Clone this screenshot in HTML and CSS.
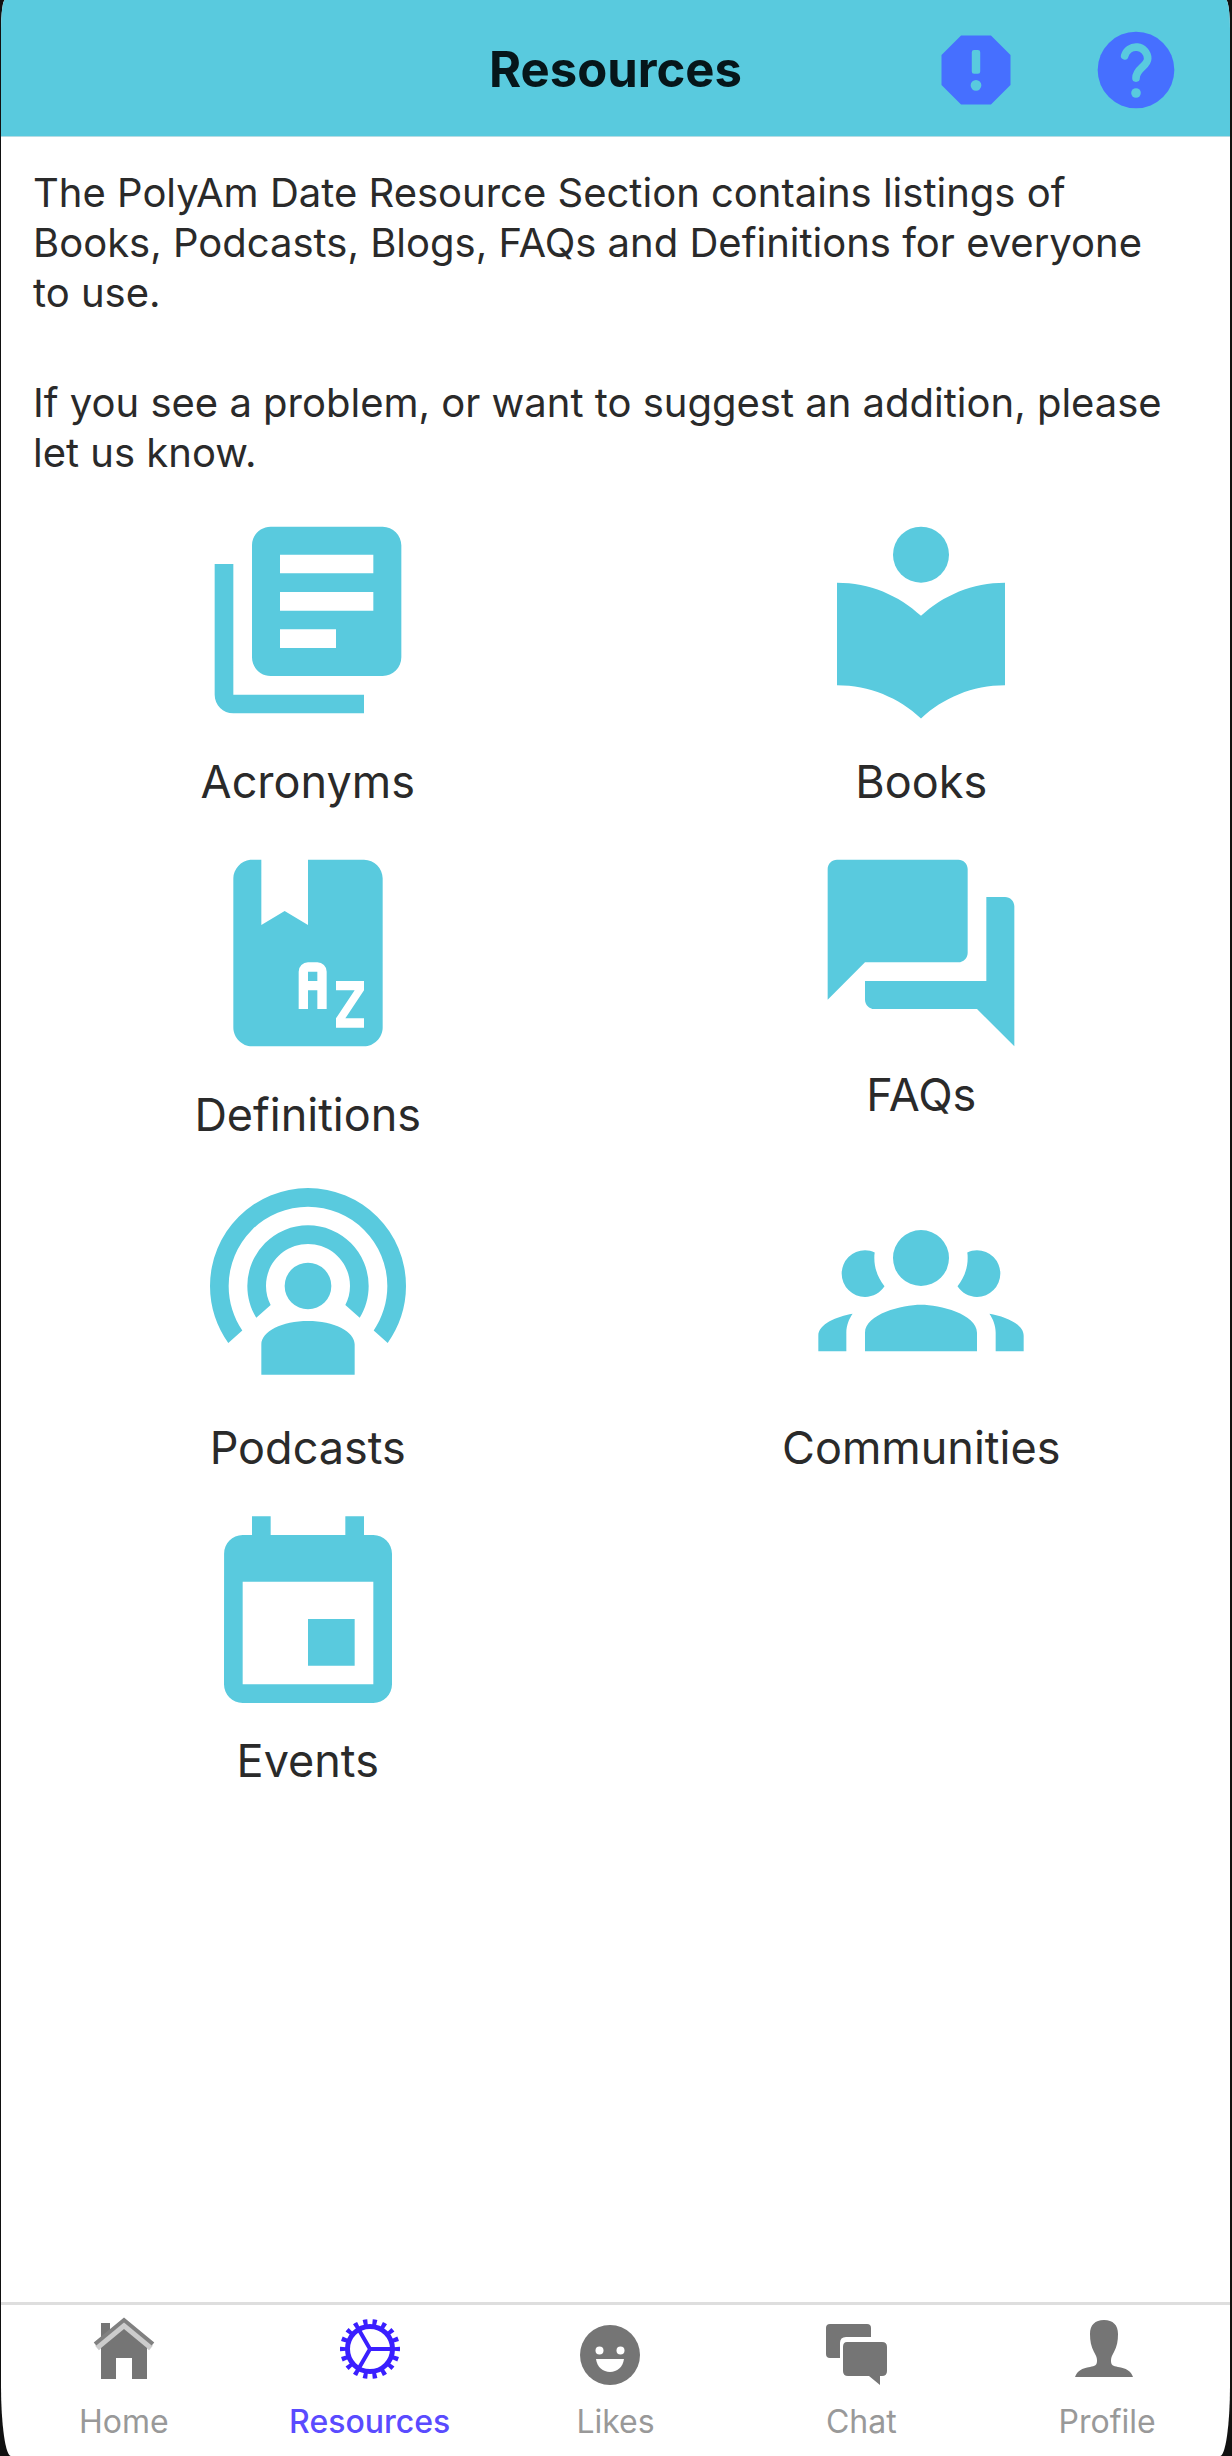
FILE: index.html
```html
<!DOCTYPE html>
<html lang="en">
<head>
<meta charset="utf-8">
<meta name="viewport" content="width=device-width, initial-scale=1">
<title>Resources</title>
<link rel="stylesheet" href="styles.css">
</head>
<body>
<div class="screen">
  <header class="header">
    <h1 class="title">Resources</h1>
    <div class="actions">
      <button class="action" type="button" aria-label="Report a problem">
        <svg viewBox="0 0 24 24"><path fill-rule="evenodd" d="M15.9 3H8.1L3 8.1v7.8L8.1 21h7.8L21 15.9V8.1zM12 17.4a1.4 1.4 0 1 1 0-2.8 1.4 1.4 0 0 1 0 2.8zM13.1 12.4a.6.6 0 0 1-.6.6h-1a.6.6 0 0 1-.6-.6V7.4a.6.6 0 0 1 .6-.6h1a.6.6 0 0 1 .6.6z"/></svg>
      </button>
      <button class="action" type="button" aria-label="Help">
        <svg viewBox="0 0 24 24"><circle cx="12" cy="12" r="10"/><path class="mark" d="M9.05 8.3A3.05 3.05 0 0 1 15.05 9c0 2.1-3.05 2.5-3.05 5.1"/><circle class="dot" cx="12" cy="18" r="1.25"/></svg>
      </button>
    </div>
  </header>

  <main class="content">
    <div class="intro">
      <p>The PolyAm Date Resource Section contains listings of Books, Podcasts, Blogs, FAQs and Definitions for everyone to use.</p>
      <p>If you see a problem, or want to suggest an addition, please let us know.</p>
    </div>

    <nav class="grid" aria-label="Resource sections">
      <a class="tile" href="#acronyms">
        <svg viewBox="0 0 24 24"><path d="M4 6H2v14c0 1.100.9 2 2 2h14v-2H4V6zM20 2H8c-1.100 0-2 .9-2 2v12c0 1.100.9 2 2 2h12c1.100 0 2-.9 2-2V4c0-1.100-.9-2-2-2zM19 7H9V5h10zM19 11H9V9h10zM15 15H9v-2h6z" fill-rule="evenodd"/></svg>
        <span>Acronyms</span>
      </a>
      <a class="tile" href="#books">
        <svg viewBox="0 0 24 24"><path d="M12 11.550C9.640 9.350 6.480 8 3 8v11c3.480 0 6.640 1.350 9 3.550 2.360-2.190 5.520-3.550 9-3.550V8c-3.480 0-6.640 1.350-9 3.550z"/><circle cx="12" cy="5" r="3"/></svg>
        <span>Books</span>
      </a>
      <a class="tile" href="#definitions">
        <svg viewBox="0 0 24 24"><path fill-rule="evenodd" d="M5.810 2C4.830 2.090 4 3 4 4V20C4 21.050 4.950 22 6 22H18C19.050 22 20 21.050 20 20V4C20 2.890 19.100 2 18 2H12V9L9.500 7.500L7 9V2H6ZM12 13H13A1 1 0 0 1 14 14V18H13V16H12V18H11V14A1 1 0 0 1 12 13M12 14V15H13V14H12M15 15H18V16L16 19H18V20H15V19L17 16H15V15Z"/></svg>
        <span>Definitions</span>
      </a>
      <a class="tile tile-close" href="#faqs">
        <svg viewBox="0 0 24 24"><path d="M21 6h-2v9H6v2c0 .55.45 1 1 1h11l4 4V7c0-.55-.45-1-1-1zm-4 6V3c0-.55-.45-1-1-1H3c-.55 0-1 .45-1 1v14l4-4h10c.55 0 1-.45 1-1z"/></svg>
        <span>FAQs</span>
      </a>
      <a class="tile" href="#podcasts">
        <svg viewBox="0 0 24 24"><path d="M17,18.25V21.5H7V18.25C7,16.87 9.24,15.75 12,15.75C14.76,15.75 17,16.87 17,18.25M12,5.5A6.5,6.5 0 0,1 18.5,12C18.5,13.25 18.15,14.42 17.54,15.41L16,14.04C16.32,13.43 16.5,12.73 16.5,12C16.5,9.5 14.5,7.5 12,7.5C9.5,7.5 7.5,9.5 7.5,12C7.5,12.73 7.68,13.43 8,14.04L6.46,15.41C5.85,14.42 5.5,13.25 5.5,12A6.5,6.5 0 0,1 12,5.5M12,1.5A10.5,10.5 0 0,1 22.5,12C22.5,14.28 21.77,16.39 20.54,18.11L19.04,16.76C19.96,15.4 20.5,13.76 20.5,12A8.5,8.5 0 0,0 12,3.5A8.5,8.5 0 0,0 3.5,12C3.5,13.76 4.04,15.4 4.96,16.76L3.46,18.11C2.23,16.39 1.5,14.28 1.5,12A10.5,10.5 0 0,1 12,1.5M12,9.5A2.5,2.5 0 0,1 14.5,12A2.5,2.5 0 0,1 12,14.5A2.5,2.5 0 0,1 9.5,12A2.5,2.5 0 0,1 12,9.5Z"/></svg>
        <span>Podcasts</span>
      </a>
      <a class="tile" href="#communities">
        <svg viewBox="0 0 24 24"><path d="M12,6A3,3 0 0,0 9,9A3,3 0 0,0 12,12A3,3 0 0,0 15,9A3,3 0 0,0 12,6M6,8.17A2.5,2.5 0 0,0 3.5,10.67A2.5,2.5 0 0,0 6,13.17C6.88,13.17 7.65,12.71 8.09,12.03C7.42,11.18 7,10.15 7,9C7,8.8 7,8.6 7.04,8.4C6.72,8.25 6.37,8.17 6,8.17M18,8.17C17.63,8.17 17.28,8.25 16.96,8.4C17,8.6 17,8.8 17,9C17,10.15 16.58,11.18 15.91,12.03C16.35,12.71 17.12,13.17 18,13.17A2.5,2.5 0 0,0 20.5,10.67A2.5,2.5 0 0,0 18,8.17M12,14C10,14 6,15 6,17V19H18V17C18,15 14,14 12,14M4.67,14.97C3,15.26 1,16.04 1,17.33V19H4V17C4,16.22 4.29,15.53 4.67,14.97M19.33,14.97C19.71,15.53 20,16.22 20,17V19H23V17.33C23,16.04 21,15.26 19.33,14.97Z"/></svg>
        <span>Communities</span>
      </a>
      <a class="tile tile-close" href="#events">
        <svg viewBox="0 0 24 24"><path d="M17 12h-5v5h5v-5zM16 1v2H8V1H6v2H5c-1.110 0-1.990.9-1.990 2L3 19c0 1.100.890 2 2 2h14c1.100 0 2-.9 2-2V5c0-1.100-.9-2-2-2h-1V1h-2zm3 18H5V8h14v11z"/></svg>
        <span>Events</span>
      </a>
    </nav>
  </main>

  <nav class="tabs" aria-label="Main">
    <a class="tab" href="#home">
      <svg viewBox="0 0 72 72"><path d="M13 9h9v8l-9 9z"/><path class="roof-gap" d="M9 34 36 12l27 22"/><path class="roof" d="M7 30 36 6l29 24"/><path d="M36 15 59 34v31H44V44H28v21H13V34z"/></svg>
      <span>Home</span>
    </a>
    <a class="tab tab-active" href="#resources" aria-current="page">
      <svg viewBox="0 0 72 72"><g class="gear"><circle cx="36" cy="35" r="22.500" stroke-width="5"/><circle cx="36" cy="35" r="27" stroke-width="6" pathLength="36" stroke-dasharray=".9 1.100" stroke-dashoffset=".45"/><path stroke-width="4" d="M36 35h24M36 35 24 14.200M36 35 24 55.800"/></g></svg>
      <span>Resources</span>
    </a>
    <a class="tab" href="#likes">
      <svg viewBox="5 0 72 72"><circle cx="36" cy="41" r="30"/><g class="face"><circle cx="25.500" cy="36.500" r="4"/><circle cx="46.500" cy="36.500" r="4"/><path d="M22 45h28c-1 8-7 13-14 13s-13-5-14-13z"/></g></svg>
      <span>Likes</span>
    </a>
    <a class="tab" href="#chat">
      <svg viewBox="5 0 72 72"><path d="M10 10h37q4 0 4 4v9H26q-6 0-6 6v15H10q-4 0-4-4V14q0-4 4-4z"/><path d="M27 28h35q5 0 5 5v24q0 5-5 5h-2v9l-11-9H28q-5 0-5-5V33q0-5 4-5z"/></svg>
      <span>Chat</span>
    </a>
    <a class="tab" href="#profile">
      <svg viewBox="3 0 72 72"><path d="M36 6c9 0 14 5 14 14 0 7-1 12-4 18-2 4-3 5-3 9 0 4 2 5 7 6 8 1 13 4 15 10H7c2-6 7-9 15-10 5-1 7-2 7-6 0-4-1-5-3-9-3-6-4-11-4-18 0-9 5-14 14-14z"/></svg>
      <span>Profile</span>
    </a>
  </nav>
</div>
</body>
</html>
```
FILE: styles.css
```css
* {
  box-sizing: border-box;
}

body {
  margin: 0;
  background: #111;
  font-family: Inter, "Liberation Sans", sans-serif;
  color: #2a2a2a;
}

a {
  color: inherit;
  text-decoration: none;
}

.screen {
  display: flex;
  flex-direction: column;
  min-height: 100vh;
  margin: 0 2px 0 1px;
  overflow: hidden;
  background: #fff;
  border-radius: 4px 4px 10px 10px / 30px 30px 70px 70px;
}

.header {
  display: grid;
  grid-template-columns: 1fr auto 1fr;
  align-items: center;
  height: 137px;
  padding: 3px 48px 0;
  background: #59cade;
  border-bottom: 1px solid #b5dce4;
}

.title {
  grid-column: 2;
  margin: 0;
  font-size: 49px;
  line-height: 60px;
  font-weight: 700;
  color: #06161a;
}

.actions {
  display: flex;
  justify-content: flex-end;
  gap: 68px;
}

.action {
  width: 92px;
  height: 92px;
  padding: 0;
  border: 0;
  background: none;
  fill: #466fff;
}

.action svg {
  display: block;
}

.mark {
  fill: none;
  stroke: #59cade;
  stroke-width: 2;
  stroke-linecap: round;
}

.dot {
  fill: #59cade;
}

.content {
  flex: 1;
}

.intro {
  padding: 31px 48px 30px 32px;
  font-size: 40px;
  line-height: 50px;
}

.intro p {
  margin: 0;
}

.intro p + p {
  margin-top: 60px;
}

.grid {
  display: grid;
  grid-template-columns: 1fr 1fr;
  row-gap: 33px;
  padding-right: 2px;
}

.tile {
  display: flex;
  flex-direction: column;
  align-items: center;
  gap: 24px;
  font-size: 45px;
  line-height: 52px;
}

.tile-close {
  gap: 4px;
}

.tile svg {
  width: 224px;
  height: 224px;
  fill: #59cade;
}

.tabs {
  display: grid;
  grid-template-columns: repeat(5, 1fr);
  height: 154px;
  padding-top: 9px;
  border-top: 3px solid #dedede;
}

.tab {
  display: flex;
  flex-direction: column;
  align-items: center;
  gap: 16px;
  font-size: 32px;
  line-height: 40px;
  color: #999;
  fill: #757575;
}

.tab svg {
  width: 72px;
  height: 72px;
}

.tab-active {
  color: #5a4bff;
  font-weight: 500;
}

.roof,
.roof-gap,
.gear {
  fill: none;
}

.roof {
  stroke: #808080;
  stroke-width: 4;
}

.roof-gap {
  stroke: #ccc;
  stroke-width: 6;
}

.gear {
  stroke: #3a1fff;
}

.face {
  fill: #fff;
}
```
